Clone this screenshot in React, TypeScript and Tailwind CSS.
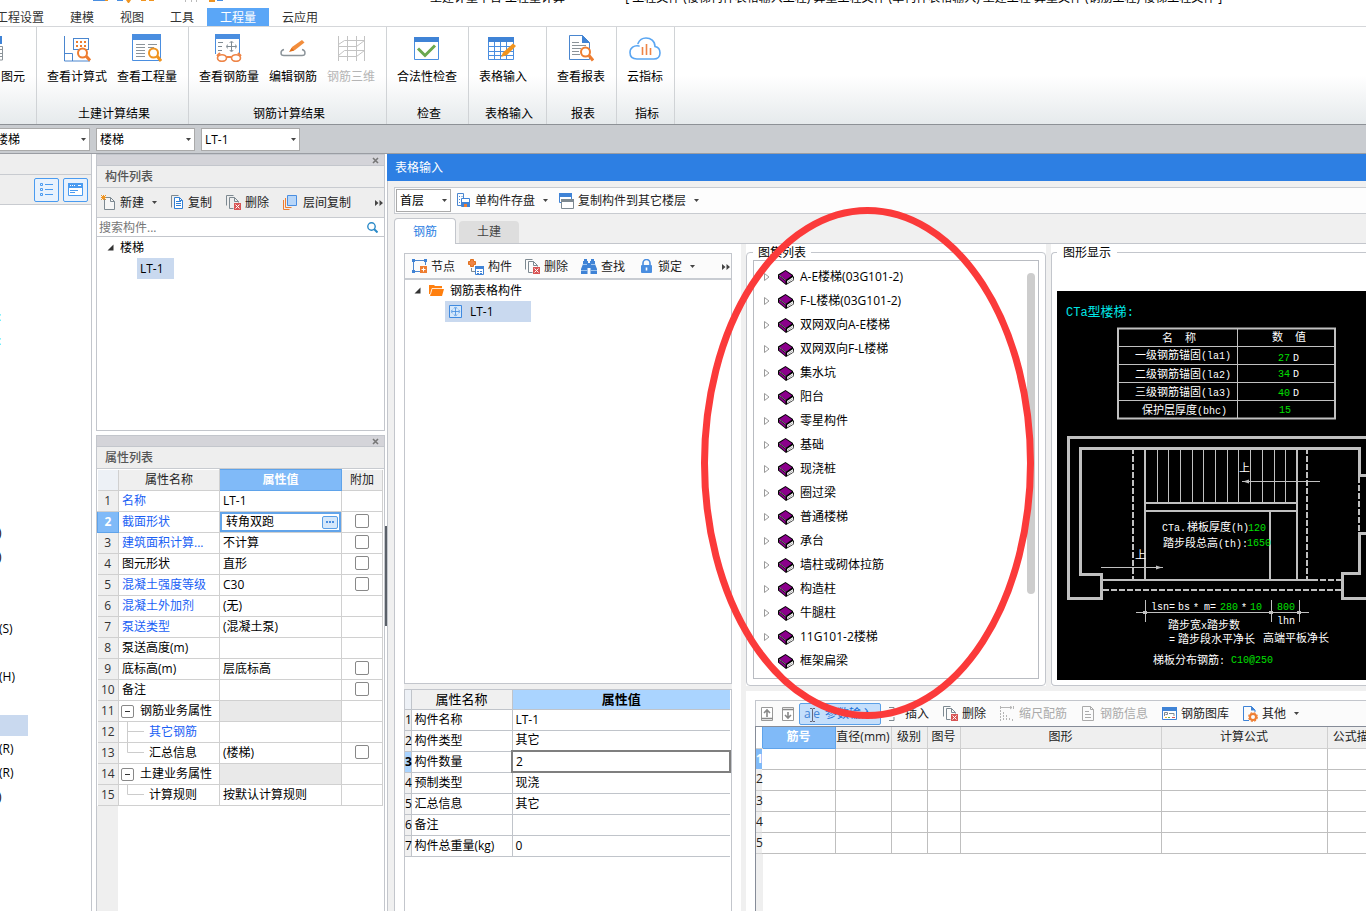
import type { ReactNode } from "react";

const treeItems = [
  "A-E楼梯(03G101-2)",
  "F-L楼梯(03G101-2)",
  "双网双向A-E楼梯",
  "双网双向F-L楼梯",
  "集水坑",
  "阳台",
  "零星构件",
  "基础",
  "现浇桩",
  "圈过梁",
  "普通楼梯",
  "承台",
  "墙柱或砌体拉筋",
  "构造柱",
  "牛腿柱",
  "11G101-2楼梯",
  "框架扁梁",
];

type PropRow = {
  name: string;
  value?: string;
  blue?: boolean;
  check?: boolean;
  group?: boolean;
  child?: "mid" | "last";
  active?: boolean;
};

const propRows: PropRow[] = [
  { name: "名称", value: "LT-1", blue: true },
  { name: "截面形状", value: "转角双跑", blue: true, check: true, active: true },
  { name: "建筑面积计算...", value: "不计算", blue: true, check: true },
  { name: "图元形状", value: "直形", check: true },
  { name: "混凝土强度等级", value: "C30", blue: true, check: true },
  { name: "混凝土外加剂", value: "(无)", blue: true },
  { name: "泵送类型", value: "(混凝土泵)", blue: true },
  { name: "泵送高度(m)" },
  { name: "底标高(m)", value: "层底标高", check: true },
  { name: "备注", check: true },
  { name: "钢筋业务属性", group: true },
  { name: "其它钢筋", blue: true, child: "mid" },
  { name: "汇总信息", value: "(楼梯)", check: true, child: "last" },
  { name: "土建业务属性", group: true },
  { name: "计算规则", value: "按默认计算规则", child: "last" },
];

const memberRows = [
  ["构件名称", "LT-1"],
  ["构件类型", "其它"],
  ["构件数量", "2"],
  ["预制类型", "现浇"],
  ["汇总信息", "其它"],
  ["备注", ""],
  ["构件总重量(kg)", "0"],
];

const navRows = ["", "", "", "", ":", ":", "", "", "", "", "", "", "", ")", ")", "", "", "(S)", "", "(H)", "", "sel", "(R)", "(R)", ")"];

/* ---------- icons ---------- */

function Svg({ w, h, children }: { w: number; h: number; children: ReactNode }) {
  return (
    <svg width={w} height={h} viewBox={`0 0 ${w} ${h}`} fill="none" className="shrink-0" aria-hidden="true">
      {children}
    </svg>
  );
}

const Caret = () => (
  <Svg w={5} h={3}>
    <path d="M0 0h5L2.500 3z" fill="#444" />
  </Svg>
);

const More = () => (
  <Svg w={8} h={6}>
    <path d="M0 0l3.500 3L0 6zM4.500 0L8 3 4.500 6z" fill="#444" />
  </Svg>
);

const Opened = () => (
  <Svg w={7} h={7}>
    <path d="M6.500 .5v6h-6z" fill="#333" />
  </Svg>
);

const CloseMark = () => (
  <Svg w={7} h={7}>
    <path d="M1 1l5 5M6 1L1 6" stroke="#777" strokeWidth="1.6" />
  </Svg>
);

const CalcIcon = () => (
  <Svg w={28} h={28}>
    <path d="M1.500 2v25H27M1.500 19.500h8v7.500" stroke="#4a86cf" />
    <rect x="10.500" y="4.500" width="15" height="11" stroke="#4a86cf" />
    <path d="M13 8h2m2 0h2m2 0h2M13 12h2m2 0h2m2 0h2" stroke="#ee7d31" strokeWidth="2" />
    <circle cx="19.500" cy="19" r="4.500" fill="#fff" stroke="#ee7d31" strokeWidth="2" />
    <path d="M23 22l4 4.500" stroke="#ee7d31" strokeWidth="3" />
  </Svg>
);

const QuantityIcon = () => (
  <Svg w={30} h={28}>
    <path d="M.5 .5h28v26H.5z" fill="#fff" stroke="#4a8ee0" />
    <path d="M0 0h29v6H0z" fill="#4a8ee0" />
    <path d="M4 10.500h9M4 13.500h9M4 16.500h9M4 19.500h9M4 22.500h9M16 10.500h9M16 13.500h6" stroke="#8b9399" />
    <circle cx="21.500" cy="19" r="4.500" fill="#fff" stroke="#f0941f" strokeWidth="2" />
    <path d="M25 22l4 5" stroke="#f0941f" strokeWidth="3" />
  </Svg>
);

const RebarQuantityIcon = () => (
  <Svg w={30} h={28}>
    <path d="M1.500 20V.5h24V20" fill="#fff" stroke="#4a8ee0" />
    <path d="M1 0h25v5H1z" fill="#4a8ee0" />
    <path d="M4 8.500h5M4 12.500h4M4 16.500h4" stroke="#7f8b93" />
    <path d="M17.500 8v9M13 12.500h9M16 9c0-2 3-2 3 0M16 16c0 2 3 2 3 0M14 11c-2 0-2 3 0 3M21 11c2 0 2 3 0 3" stroke="#7f8b93" />
    <path d="M6 19l-3 3M24 19l3 3M12.500 23h5" stroke="#ee8446" strokeWidth="2" />
    <ellipse cx="8" cy="24" rx="4.500" ry="3.300" fill="#fff" stroke="#ee8446" strokeWidth="1.600" />
    <ellipse cx="22" cy="24" rx="4.500" ry="3.300" fill="#fff" stroke="#ee8446" strokeWidth="1.600" />
  </Svg>
);

const EditRebarIcon = () => (
  <Svg w={26} h={28}>
    <path d="M4 15.500c-4 1-4 6 0 6h18c4 0 4-5 0-6" stroke="#8b9399" strokeWidth="1.400" />
    <path d="M10 17l2-4L22 6l2.500 2.500L15 16z" fill="#f28d3c" />
    <path d="M9 18l2.500-4 3 2.500z" fill="#e0701d" />
  </Svg>
);

const Rebar3dIcon = () => (
  <Svg w={28} h={28}>
    <path d="M1.500 2v25M10.500 2v25M19.500 2v25M27.500 2v25M1.500 10.500l6-4h20M1.500 12.500h18l8-6M1.500 21.500l6-5h20M1.500 22.500h18l8-6" stroke="#c3c3c3" />
  </Svg>
);

const LegalIcon = () => (
  <Svg w={26} h={28}>
    <path d="M.5 3.500h24v22H.5z" fill="#fff" stroke="#4a8ee0" />
    <path d="M0 3h25v5H0z" fill="#3f83d6" />
    <path d="M4 14.500l7 7 10-10" stroke="#6aa84f" strokeWidth="3" />
  </Svg>
);

const TableInputIcon = () => (
  <Svg w={30} h={28}>
    <path d="M.5 3.500h25v22H.5z" fill="#fff" stroke="#4a8ee0" />
    <path d="M0 3h26v5H0z" fill="#3f83d6" />
    <path d="M0 12.500h25M0 17.500h25M0 21.500h25M6.500 8v17M12.500 8v17M18.500 8v17" stroke="#4a8ee0" />
    <path d="M13 23l2-4.500L25 9.500l3 2.500-9 9z" fill="#f0941f" />
  </Svg>
);

const ReportIcon = () => (
  <Svg w={26} h={28}>
    <path d="M1.500 1.500h13l7 7v17h-20z" fill="#fff" stroke="#4a86cf" />
    <path d="M14 1v8h8z" fill="#3f83d6" />
    <path d="M4 8.500h7M4 11.500h14M4 14.500h9M4 17.500h7M4 20.500h8" stroke="#8b9399" />
    <circle cx="17.500" cy="18" r="4.500" fill="#fff" stroke="#ee7d31" strokeWidth="2" />
    <path d="M21 21.500l4 5" stroke="#ee7d31" strokeWidth="3" />
  </Svg>
);

const CloudIcon = () => (
  <Svg w={32} h={28}>
    <path d="M10 12c-5-1-9 2-9 6.500S4 25 8 25h17c3.500 0 6-2.500 6-6s-2-6-5-6.500C26 7 21.500 4 17 4s-7 3-8 5.500" stroke="#5aa6f2" strokeWidth="1.600" strokeLinecap="round" />
    <path d="M13.500 13v8M17.500 10v11M21.500 14v7" stroke="#ee8446" strokeWidth="1.600" />
  </Svg>
);

const NewIcon = () => (
  <Svg w={15} h={15}>
    <path d="M3.500 2.500h6l4 4v8h-10z" fill="#f6f6f6" stroke="#7d8991" />
    <path d="M9.500 2.500v4h4" stroke="#7d8991" />
    <path d="M0 0l5 5M5 0L0 5M2.500 0v5M0 2.500h5" stroke="#f0941f" />
  </Svg>
);

const CopyIcon = () => (
  <Svg w={13} h={15}>
    <path d="M.5 12.500V.5h7" stroke="#7d8991" />
    <path d="M3.500 2.500h5l3 3v8h-8z" fill="#fff" stroke="#2f7fd6" />
    <path d="M5 6.500h5M5 8.500h5M5 10.500h5M8.500 2.500v3h3" stroke="#2f7fd6" />
  </Svg>
);

const DeleteIcon = () => (
  <Svg w={15} h={15}>
    <path d="M.5 10.500V.5h7M3.500 13.500V2.500h5l4 4v1M3.500 13.500h4M8.500 2.500v4h4" stroke="#7d8991" />
    <path d="M8 8h7v7H8z" fill="#d95555" />
    <path d="M9.500 9.500l4 4M13.500 9.500l-4 4" stroke="#fff" />
  </Svg>
);

const LayerCopyIcon = () => (
  <Svg w={16} h={15}>
    <path d="M.5 5v9.500h6M2.500 3v9.500h6" stroke="#ee7d31" />
    <path d="M4.500 .5h9v10h-9z" fill="#b8d6f8" stroke="#4a8ee0" />
  </Svg>
);

const SaveMemberIcon = () => (
  <Svg w={14} h={15}>
    <path d="M4 12.500H.5V.5h6V5" stroke="#4a86cf" />
    <path d="M2 3.500h1M2 6.500h1M2 9.500h1M4.500 3.500h1" stroke="#4a86cf" />
    <path d="M4.500 5.500h8v8h-8z" fill="#fff" stroke="#3f83d6" />
    <path d="M5 9h8v5H5z" fill="#3f83d6" />
    <path d="M7 11h3v3H7z" fill="#ee7d31" />
  </Svg>
);

const CopyFloorIcon = () => (
  <Svg w={16} h={16}>
    <path d="M1.500 .5h12v9h-12z" fill="#fff" stroke="#3f83d6" />
    <path d="M1 0h13v4H1z" fill="#3f83d6" />
    <path d="M3.500 6.500h12v9h-12z" fill="#fff" stroke="#7d8991" />
    <path d="M3 6h13v3H3z" fill="#7d8991" />
  </Svg>
);

const NodeIcon = () => (
  <Svg w={15} h={15}>
    <path d="M8 12.500H1.500v-11h12V6" stroke="#4a86cf" />
    <path d="M0 0h3v3H0zM12 0h3v3h-3zM0 11h3v3H0z" fill="#3f83d6" />
    <path d="M8 7h7v7H8z" fill="#ee7d31" />
    <path d="M9.500 10.500h4M11.500 8.500v4" stroke="#fff" />
  </Svg>
);

const MemberIcon = () => (
  <Svg w={16} h={16}>
    <path d="M2.500 .5h3v2h2v3h-2v2h-3v-2h-2v-3h2z" fill="#ee8446" stroke="#e0701d" />
    <path d="M3.500 9v3.500H7" stroke="#7d8991" />
    <path d="M7.500 7.500h8v8h-8z" fill="#fff" stroke="#3f83d6" />
    <path d="M7 7h9v3H7z" fill="#3f83d6" />
    <path d="M9 12.500h2m1 0h2M9 14.500h2m1 0h2" stroke="#3f83d6" />
  </Svg>
);

const FindIcon = () => (
  <Svg w={16} h={15}>
    <path d="M3 0h3v2h1v2h2V2h1V0h3v2h1v3l2 5v5H9.500V9h-3v6H0v-5l2-5V2h1z" fill="#3f83d6" />
    <path d="M2 5.500h4M10 5.500h4M0 11.500h6.500M9.500 11.500H16" stroke="#9cc4f0" />
  </Svg>
);

const LockIcon = () => (
  <Svg w={16} h={15}>
    <path d="M5 7V4a3.500 3.500 0 017 0v3" stroke="#4a8ee0" strokeWidth="1.600" />
    <rect x="3" y="6" width="11" height="8" rx="1" fill="#4a8ee0" />
    <path d="M8.500 8.500v3" stroke="#fff" strokeWidth="1.600" />
  </Svg>
);

const FolderIcon = () => (
  <Svg w={15} h={13}>
    <path d="M0 1h5l1 1h7v3H3l-1 5H0z" fill="#ff7f0e" />
    <path d="M3 5h12l-2 7H1z" fill="#ff7f0e" />
    <path d="M1.500 10l1.500-5.500h11" stroke="#fff" strokeWidth=".8" />
  </Svg>
);

const RebarCellIcon = () => (
  <Svg w={13} h={13}>
    <path d="M.5 .5h12v12H.5z" fill="#d6e8fb" stroke="#3f8ae0" />
    <path d="M6.500 3v7M3 6.500h7M5 3.500c0-1.500 3-1.500 3 0M5 9.500c0 1.500 3 1.500 3 0M3.500 5c-1.500 0-1.500 3 0 3M9.500 5c1.500 0 1.500 3 0 3" stroke="#3f8ae0" strokeWidth=".8" />
  </Svg>
);

const BookIcon = () => (
  <Svg w={16} h={15}>
    <path d="M7.500 0L15 5v1l1 1-.5 3.500L8 15 0 8.500V4.500z" fill="#000" />
    <path d="M7.500 1L14 5.500 8 9.700 1.500 5z" fill="#8b008b" />
    <path d="M1 6l6.500 5.300v2.400L1 8.300z" fill="#8b008b" />
    <path d="M9 11l6-4v3.200L9 13.500z" fill="#fff" />
    <path d="M9 12.500l5.500-3.500" stroke="#888" strokeWidth=".7" />
    <path d="M1.500 5.500l6.500 5" stroke="#fff" strokeWidth=".8" strokeDasharray="1.500 1" />
  </Svg>
);

const ArrowBoxIcon = ({ down }: { down?: boolean }) => (
  <Svg w={13} h={14}>
    <path d="M.5 .5h11v13H.5z" fill="#fff" stroke="#999" />
    {down ? (
      <path d="M.5 2.500h11M6 5v6M3 8l3 3 3-3" stroke="#888" strokeWidth="1.600" />
    ) : (
      <path d="M.5 11.500h11M6 10V3M3 6l3-3 3 3" stroke="#888" strokeWidth="1.600" />
    )}
  </Svg>
);

const ParamIcon = () => (
  <span className="relative flex w-4 shrink-0 justify-between text-[#3f83d6]">
    <span>a</span>
    <span>e</span>
    <svg width="5" height="14" viewBox="0 0 5 14" fill="none" className="absolute left-[6px] top-[2px]" aria-hidden="true">
      <path d="M0 .5h2l.5 .5.500-.5h2M2.500 1v12M0 13.500h2l.5-.5.500 .5h2" stroke="#667" />
    </svg>
  </span>
);

const InsertIcon = () => (
  <Svg w={15} h={16}>
    <path d="M3 1.500h5V5M3 14.500h5V11M5 8h6" stroke="#7d8991" />
  </Svg>
);

const ScaleIcon = () => (
  <Svg w={15} h={15}>
    <path d="M.5 4v11M3.500 6v9M6.500 9v6M9.500 12v3M12.500 13v2" stroke="#b5b5b5" strokeDasharray="2 1" />
    <path d="M1 1.500h11M10 0l2 1.500L10 3M.5 0v3M13.500 0v3" stroke="#b5b5b5" />
  </Svg>
);

const InfoIcon = () => (
  <Svg w={15} h={15}>
    <path d="M1.500 .5h8l3 3v11h-11z" stroke="#aaa" />
    <path d="M4 5.500h4M4 8.500h6M4 11.500h6M9.500 .5v3h3" stroke="#aaa" />
  </Svg>
);

const LibraryIcon = () => (
  <Svg w={15} h={14}>
    <path d="M.5 .5h14v12H.5z" fill="#fff" stroke="#3f83d6" />
    <path d="M0 0h15v4H0z" fill="#3f83d6" />
    <path d="M2.500 9V5.500h3v2h-2M7 6.500h5V9" stroke="#7d8991" />
    <path d="M3 10.500h2" stroke="#e8b02c" />
    <path d="M6 10.500h2" stroke="#5cae54" />
    <path d="M10 10.500h3" stroke="#d95555" />
  </Svg>
);

const OtherIcon = () => (
  <Svg w={15} h={16}>
    <path d="M6 14.500H.5V.5h8l3.500 3.500v2" stroke="#3f83d6" />
    <path d="M8 0v4.500h4.500z" fill="#3f83d6" />
    <circle cx="10" cy="11" r="3" stroke="#ee7d31" strokeWidth="2" />
    <circle cx="10" cy="11" r="4.300" stroke="#ee7d31" strokeWidth="1.200" strokeDasharray="2 1.400" />
  </Svg>
);

/* ---------- small controls ---------- */

function ToolButton({
  icon,
  label,
  caret,
  disabled,
}: {
  icon: ReactNode;
  label: string;
  caret?: boolean;
  disabled?: boolean;
}) {
  return (
    <button
      type="button"
      disabled={disabled}
      className="flex shrink-0 items-center gap-1 whitespace-nowrap text-[#222] disabled:text-[#aaa]"
    >
      {icon}
      <span>{label}</span>
      {caret && (
        <span className="ml-1">
          <Caret />
        </span>
      )}
    </button>
  );
}

function Select({ label, value, className }: { label: string; value: string; className: string }) {
  return (
    <div className={`relative shrink-0 ${className}`}>
      <select
        aria-label={label}
        defaultValue={value}
        className="block h-full w-full appearance-none border border-[#aaa] bg-white pt-px pl-[3px] text-xs text-black"
      >
        <option>{value}</option>
      </select>
      <span className="pointer-events-none absolute inset-y-0 right-1 flex items-center">
        <Caret />
      </span>
    </div>
  );
}

function RibbonGroup({ title, className, children }: { title: string; className: string; children: ReactNode }) {
  return (
    <section className={`flex shrink-0 flex-col border-r border-[#d0d3d6] pt-[7px] ${className}`}>
      <div className="flex gap-[10px] pl-[10px]">{children}</div>
      <h2 className="mt-auto mb-[2px] pl-[3px] text-center">{title}</h2>
    </section>
  );
}

function RibbonButton({ icon, label, disabled }: { icon: ReactNode; label: string; disabled?: boolean }) {
  return (
    <button
      type="button"
      disabled={disabled}
      className="flex shrink-0 flex-col items-center gap-[7px] whitespace-nowrap disabled:text-[#b5b5b5]"
    >
      {icon}
      <span>{label}</span>
    </button>
  );
}

function PanelTitle({ title }: { title: string }) {
  return (
    <>
      <div className="flex h-[11px] shrink-0 items-center justify-end border-b border-[#c3c6cc] bg-[#d4d4d9] pr-[5px]">
        <button type="button" aria-label={`关闭${title}`}>
          <CloseMark />
        </button>
      </div>
      <h2 className="flex h-[22px] shrink-0 items-center border-b border-[#c8cbd0] bg-[#eee] pl-2 font-medium text-[#555]">
        {title}
      </h2>
    </>
  );
}

/* ---------- header ---------- */

function Header() {
  const tabs = ["工程设置", "建模", "视图", "工具", "工程量", "云应用"];
  return (
    <header className="shrink-0">
      <div className="flex h-2 items-start overflow-hidden">
        <div className="flex h-[3px] w-[430px] shrink-0 pl-[93px]">
          <Svg w={135} h={3}>
            <path d="M0 0h13v1H0zM24 0h6v1h-6zM124 0h6v1h-6z" fill="#4a8ee0" />
            <path d="M12 0h3v1h-3zM33 0h5l-2 3h-1zM48 0h5v1h-5zM56 0h5v1h-5zM116 0h6v2h-6z" fill="#f0941f" />
            <path d="M92 0h1v2h-1zM98 0h1v2h-1zM103 0h1v2h-1z" fill="#bbb" />
          </Svg>
        </div>
        <div className="flex h-[3px] items-end whitespace-nowrap leading-[10px] text-black" aria-hidden="true">
          <span>土建计量平台 工程量计算</span>
          <span className="ml-[60px]">[ 工程文件 (楼梯构件表格输入工程) 算量工程文件 (单构件表格输入) 土建工程 算量文件 (钢筋工程) 楼梯工程文件 ]</span>
        </div>
      </div>
      <nav className="-ml-[17px] flex h-[18px] whitespace-nowrap text-[#333]">
        {tabs.map((tab) => (
          <button
            key={tab}
            type="button"
            className={tab === "工程量" ? "bg-[#5aa6f7] px-[13px] pt-[2px] text-white" : "px-[13px] pt-[2px]"}
          >
            {tab}
          </button>
        ))}
      </nav>
      <div className="flex h-[99px] overflow-hidden border-t border-b border-t-[#d5d7da] border-b-[#8d9196] bg-gradient-to-b from-white from-50% to-[#e6eaec] text-black">
        <section className="flex w-[37px] shrink-0 flex-col border-r border-[#d0d3d6] pt-[7px]">
          <button type="button" className="flex flex-col items-start gap-[7px]">
            <Svg w={3} h={28}>
              <path d="M0 2h2v8H0z" fill="#3f83d6" />
              <path d="M0 12.500h2.500V26H0M0 15.500h2M0 19.500h2M0 22.500h2" stroke="#8b9399" />
            </Svg>
            <span className="pl-px">图元</span>
          </button>
        </section>
        <RibbonGroup title="土建计算结果" className="w-[152px]">
          <RibbonButton icon={<CalcIcon />} label="查看计算式" />
          <RibbonButton icon={<QuantityIcon />} label="查看工程量" />
        </RibbonGroup>
        <RibbonGroup title="钢筋计算结果" className="w-[198px]">
          <RibbonButton icon={<RebarQuantityIcon />} label="查看钢筋量" />
          <RibbonButton icon={<EditRebarIcon />} label="编辑钢筋" />
          <RibbonButton icon={<Rebar3dIcon />} label="钢筋三维" disabled />
        </RibbonGroup>
        <RibbonGroup title="检查" className="w-[82px]">
          <RibbonButton icon={<LegalIcon />} label="合法性检查" />
        </RibbonGroup>
        <RibbonGroup title="表格输入" className="w-[78px]">
          <RibbonButton icon={<TableInputIcon />} label="表格输入" />
        </RibbonGroup>
        <RibbonGroup title="报表" className="w-[70px]">
          <RibbonButton icon={<ReportIcon />} label="查看报表" />
        </RibbonGroup>
        <RibbonGroup title="指标" className="w-[58px]">
          <RibbonButton icon={<CloudIcon />} label="云指标" />
        </RibbonGroup>
      </div>
      <div className="flex h-[29px] items-center gap-[6px] border-b border-[#9a9da3] bg-[#c9ccd0]">
        <Select label="构件类别" value="楼梯" className="-ml-2 h-[23px] w-[98px]" />
        <Select label="构件类型" value="楼梯" className="h-[23px] w-[99px]" />
        <Select label="构件" value="LT-1" className="h-[23px] w-[99px]" />
      </div>
    </header>
  );
}

/* ---------- left panels ---------- */

function NavStrip() {
  return (
    <aside className="mr-1 flex w-[92px] shrink-0 flex-col overflow-hidden border-r border-[#c3c6cc] bg-white">
      <div className="h-[21px] shrink-0 border-b border-[#c8cbd0] bg-[#eee]" />
      <div className="flex h-[30px] shrink-0 items-center justify-end gap-1 border-b border-[#c8cbd0] bg-[#eee] pr-[3px]">
        <button type="button" aria-label="列表" className="flex h-6 w-[25px] items-center justify-center rounded-xs border border-[#4a9bf0] bg-[#e8f2fd]">
          <Svg w={13} h={14}>
            <path d="M.5 .5h2v2h-2zM.5 5.500h2v2h-2zM.5 10.500h2v2h-2zM5 1.500h8M5 6.500h8M5 11.500h8" stroke="#4a9bf0" />
          </Svg>
        </button>
        <button type="button" aria-label="面板" className="flex h-6 w-[25px] items-center justify-center rounded-xs border border-[#4a9bf0] bg-[#e8f2fd]">
          <Svg w={15} h={13}>
            <path d="M.5 .5h14v12H.5z" fill="#fff" stroke="#4a9bf0" />
            <path d="M0 0h15v5H0z" fill="#4a9bf0" />
            <path d="M2 2.500h1m1 0h1m1 0h1M10 2.500h3" stroke="#fff" />
            <path d="M2 7.500h8M2 9.500h5" stroke="#4a9bf0" />
          </Svg>
        </button>
      </div>
      <ul className="pt-1 text-black">
        {navRows.map((row, i) => (
          <li key={i} className="flex h-6 items-center">
            {row === "sel" ? (
              <span className="h-[21px] w-7 bg-[#c9d9ef]" />
            ) : (
              <span className={row === ":" ? "-ml-[2px] text-[#00c8d8]" : row === ")" ? "-ml-[2px]" : "-ml-px"}>{row}</span>
            )}
          </li>
        ))}
      </ul>
    </aside>
  );
}

function ComponentPanel() {
  return (
    <section className="flex h-[277px] shrink-0 flex-col border border-[#c3c6cc] bg-white">
      <PanelTitle title="构件列表" />
      <div className="flex h-[30px] shrink-0 items-center gap-[14px] border-b border-[#c8cbd0] bg-[#eee] pl-1">
        <ToolButton icon={<NewIcon />} label="新建" caret />
        <ToolButton icon={<CopyIcon />} label="复制" />
        <ToolButton icon={<DeleteIcon />} label="删除" />
        <ToolButton icon={<LayerCopyIcon />} label="层间复制" />
        <button type="button" aria-label="更多" className="ml-auto pr-px">
          <More />
        </button>
      </div>
      <div className="flex h-[19px] shrink-0 items-center border-b border-[#c3c6cc] pr-[6px]">
        <input
          aria-label="搜索构件"
          placeholder="搜索构件..."
          className="h-full min-w-0 flex-1 bg-white pl-[2px] text-xs outline-none placeholder:text-[#777]"
        />
        <Svg w={11} h={11}>
          <circle cx="4.500" cy="4.500" r="3.700" stroke="#2b8ac8" strokeWidth="1.400" />
          <path d="M7 7l3.500 3.500" stroke="#2b8ac8" strokeWidth="2" />
        </Svg>
      </div>
      <ul className="text-black">
        <li>
          <div className="flex h-[21px] items-center gap-[6px] pl-[10px]">
            <Opened />
            <span>楼梯</span>
          </div>
          <ul>
            <li className="ml-10 flex h-[21px] w-[37px] items-center bg-[#c9d9ef] pl-[3px]">LT-1</li>
          </ul>
        </li>
      </ul>
    </section>
  );
}

function NameCell({ row }: { row: PropRow }) {
  if (row.group) {
    return (
      <div className="flex items-center gap-[6px] pl-[2px]">
        <button type="button" aria-label={`折叠${row.name}`} className="flex size-[13px] items-center justify-center rounded-xs border border-[#888] bg-white">
          <span className="h-px w-[5px] bg-[#333]" />
        </button>
        <span>{row.name}</span>
      </div>
    );
  }
  if (row.child) {
    return (
      <div className="flex items-center gap-[5px] pl-2">
        <svg width="17" height="20" viewBox="0 0 17 20" fill="none" className="shrink-0" aria-hidden="true">
          <path d={row.child === "mid" ? "M.5 0v20M0 9.500h17" : "M.5 0v9.500H17"} stroke="#ccc" />
        </svg>
        <span>{row.name}</span>
      </div>
    );
  }
  return <span className="pl-[3px]">{row.name}</span>;
}

function PropertyPanel() {
  return (
    <section className="mt-1 flex min-h-0 flex-1 flex-col overflow-hidden border border-b-0 border-[#c3c6cc] bg-white">
      <PanelTitle title="属性列表" />
      <table className="w-[285px] table-fixed border-collapse leading-4 text-black">
        <colgroup>
          <col className="w-[21px]" />
          <col className="w-[101px]" />
          <col className="w-[122px]" />
          <col className="w-[41px]" />
        </colgroup>
        <thead>
          <tr className="h-[21px] text-[#222]">
            <th className="border-r border-b border-[#d0d0d0] bg-[#edf1f6] p-0" />
            <th className="border-r border-b border-[#d0d0d0] bg-[#efefef] p-0 font-normal">属性名称</th>
            <th className="border border-[#5fa3ea] bg-[#80baf8] p-0 font-bold text-white">属性值</th>
            <th className="border-r border-b border-[#d0d0d0] bg-[#efefef] p-0 font-normal">附加</th>
          </tr>
        </thead>
        <tbody>
          {propRows.map((row, i) => (
            <tr key={i} className="h-[21px] whitespace-nowrap">
              <td
                className={
                  row.active
                    ? "border border-[#5fa3ea] bg-[#80baf8] p-0 text-center font-bold text-white"
                    : "border-r border-b border-[#d0d0d0] bg-[#efefef] p-0 text-center text-[#333]"
                }
              >
                {i + 1}
              </td>
              <td className={row.blue ? "border-r border-b border-[#d0d0d0] p-0 text-[#1a5ff5]" : "border-r border-b border-[#d0d0d0] p-0"}>
                <NameCell row={row} />
              </td>
              <td
                className={
                  row.group
                    ? "border-r border-b border-[#d0d0d0] bg-[#e9e9e9] p-0"
                    : "border-r border-b border-[#d0d0d0] p-0 pl-[3px]"
                }
              >
                {row.active ? (
                  <div className="-ml-[3px] flex h-5 items-center justify-between border-2 border-[#62a4ea] pr-px pl-1">
                    <span>{row.value}</span>
                    <button type="button" aria-label="选择截面形状" className="flex h-[13px] w-4 items-center justify-center rounded-xs border border-[#5a9fe6] bg-[#d6e8fb]">
                      <Svg w={10} h={2}>
                        <path d="M1 0h2v2H1zM4 0h2v2H4zM7 0h2v2H7z" fill="#4a8ee0" />
                      </Svg>
                    </button>
                  </div>
                ) : (
                  row.value
                )}
              </td>
              <td className="border-r border-b border-[#d0d0d0] p-0">
                {row.check && (
                  <input
                    type="checkbox"
                    aria-label={`附加${row.name}`}
                    className="mx-auto mb-[3px] block size-[14px] appearance-none rounded-xs border border-[#888] bg-white"
                  />
                )}
              </td>
            </tr>
          ))}
        </tbody>
      </table>
      <div className="w-[21px] flex-1 bg-[#efefef]" />
    </section>
  );
}

/* ---------- table input window ---------- */

function MemberPane() {
  return (
    <div className="flex w-[347px] shrink-0 flex-col border-l border-[#c3c6cc] bg-white px-[9px] pt-[9px]">
      <div className="flex h-[431px] shrink-0 flex-col border border-[#c3c6cc]">
        <div className="flex h-[26px] shrink-0 items-center gap-[13px] border-b-2 border-[#c8ccd2] bg-[#fbfbfb] pt-px pl-[7px]">
          <ToolButton icon={<NodeIcon />} label="节点" />
          <ToolButton icon={<MemberIcon />} label="构件" />
          <ToolButton icon={<DeleteIcon />} label="删除" />
          <ToolButton icon={<FindIcon />} label="查找" />
          <ToolButton icon={<LockIcon />} label="锁定" caret />
          <button type="button" aria-label="更多" className="ml-auto pr-px">
            <More />
          </button>
        </div>
        <ul className="text-black">
          <li>
            <div className="flex h-[21px] items-center pl-[9px]">
              <Opened />
              <span className="ml-2 mr-[6px]">
                <FolderIcon />
              </span>
              <span>钢筋表格构件</span>
            </div>
            <ul>
              <li className="ml-10 flex h-[21px] w-[86px] items-center gap-2 bg-[#c9d9ef] pl-1">
                <RebarCellIcon />
                <span>LT-1</span>
              </li>
            </ul>
          </li>
        </ul>
      </div>
      <div className="h-[5px] shrink-0 bg-[#f0f0f0]" />
      <div className="flex-1 border border-b-0 border-[#c3c6cc]">
        <table className="w-full table-fixed border-collapse leading-4 text-black">
          <colgroup>
            <col className="w-[6px]" />
            <col className="w-[101px]" />
            <col />
          </colgroup>
          <thead>
            <tr className="h-[19px] text-[13px]">
              <th className="border-r border-b border-[#c0c4ca] bg-[#edf1f6] p-0" />
              <th className="border-r border-b border-[#c0c4ca] bg-[#f0f0f0] p-0 font-normal">属性名称</th>
              <th className="border-b border-[#c0c4ca] bg-[#aad4ff] p-0 font-bold">属性值</th>
            </tr>
          </thead>
          <tbody>
            {memberRows.map(([name, value], i) => (
              <tr key={name} className="h-[21px]">
                <td
                  className={
                    i === 2
                      ? "border-r border-b border-[#c0c4ca] bg-[#aad4ff] p-0 font-bold"
                      : "border-r border-b border-[#c0c4ca] bg-[#f0f0f0] p-0"
                  }
                >
                  {i + 1}
                </td>
                <td className="border-r border-b border-[#c0c4ca] p-0 pl-[3px]">{name}</td>
                <td className={i === 2 ? "border-2 border-[#7f7f7f] p-0 pl-[3px]" : "border-b border-[#c0c4ca] p-0 pl-[3px]"}>
                  {value}
                </td>
              </tr>
            ))}
          </tbody>
        </table>
      </div>
    </div>
  );
}

function AtlasList() {
  return (
    <fieldset className="flex w-[300px] shrink-0 flex-col rounded border border-[#c3c6cc] px-[6px] pb-[6px]">
      <legend className="px-[5px] pt-[2px] leading-[14px] text-black">图集列表</legend>
      <div className="relative min-h-0 flex-1 overflow-hidden border border-[#b9bcc2] bg-white pt-1">
        <ul className="text-black">
          {treeItems.map((item, i) => (
            <li key={item} className="flex h-6 items-center pl-[10px]">
              <span className="w-[14px]">
                {i < 16 && (
                  <Svg w={6} h={8}>
                    <path d="M.5 .5v7l4.500-3.500z" stroke="#999" />
                  </Svg>
                )}
              </span>
              <BookIcon />
              <span className="ml-[6px]">{item}</span>
            </li>
          ))}
          <li className="flex h-6 items-center pl-6">
            <BookIcon />
          </li>
        </ul>
        <div className="absolute top-3 right-[3px] h-[321px] w-2 rounded-full bg-[#cdcdcd]" />
      </div>
    </fieldset>
  );
}

const CAD_GREEN = "#00e000";

// Latin runs are set one size down so that they keep half the width of a CJK glyph
function CadText({ x, y, fill = "#fff", size = 11, children }: { x: number; y: number; fill?: string; size?: number; children: string }) {
  return (
    <text x={x} y={y} fill={fill} fontSize={size}>
      {children.split(/([ -~]+)/).map((part, i) => (
        <tspan key={i} fontSize={i % 2 ? size - 1 : size}>
          {part}
        </tspan>
      ))}
    </text>
  );
}

function StairDrawing() {
  const treads = [100, 111, 123, 135, 146, 158, 170, 181, 193, 205, 217, 228];
  return (
    <svg
      viewBox="0 0 309 389"
      width="309"
      height="389"
      fill="none"
      role="img"
      aria-label="CTa型楼梯"
      className="block font-['Liberation_Mono','Noto_Sans_CJK_SC',monospace]"
    >
      <CadText x={9} y={25} fill="#00e5e5" size={13}>CTa型楼梯:</CadText>

      <g stroke="#c0c0c0">
        <path d="M61 37.500h217v90H61z" strokeWidth="2" />
        <path d="M61 55.500h217M61 73.500h217M61 91.500h217M61 109.500h217M180.500 37v90" />
      </g>
      <CadText x={105} y={51}>名</CadText>
      <CadText x={128} y={51}>称</CadText>
      <CadText x={215} y={50}>数</CadText>
      <CadText x={238} y={50}>值</CadText>
      <CadText x={78} y={68}>一级钢筋锚固(la1)</CadText>
      <CadText x={78} y={87}>二级钢筋锚固(la2)</CadText>
      <CadText x={78} y={105}>三级钢筋锚固(la3)</CadText>
      <CadText x={85} y={123}>保护层厚度(bhc)</CadText>
      <CadText x={221} y={70} fill={CAD_GREEN}>27</CadText>
      <CadText x={221} y={86} fill={CAD_GREEN}>34</CadText>
      <CadText x={221} y={105} fill={CAD_GREEN}>40</CadText>
      <CadText x={222} y={122} fill={CAD_GREEN}>15</CadText>
      <CadText x={236} y={70}>D</CadText>
      <CadText x={236} y={86}>D</CadText>
      <CadText x={236} y={105}>D</CadText>

      <g stroke="#c0c0c0" strokeWidth="3">
        <path d="M310 146.500H11.500v161h33v-24h-21v-126h279v27h8" />
        <path d="M310 242.500h-7.500v40h-17v25H310" />
      </g>
      <g stroke="#c0c0c0" strokeWidth="2">
        <path d="M88 157v132M240 157v132M88 212h152M88 220h152M213 220v69M45 289h210" />
        <path d="M76 157v132M250 157v132M302 186v56M255 289h30M46 299h239" strokeDasharray="6 2" />
      </g>
      <g stroke="#c0c0c0">
        {treads.map((x) => (
          <path key={x} d={`M${x + 0.5} 158v54`} />
        ))}
        <path d="M185 190.500h78M44 276.500h62M79 321.500h173M88.500 309v22M214.500 309v22M242.500 309v22" />
      </g>
      <path d="M186 190.500l6-2v4zM105 276.500l-6-2v4zM86 320h4v3h-4zM212 320h4v3h-4zM240 320h4v3h-4z" fill="#c0c0c0" />

      <CadText x={182} y={181}>上</CadText>
      <CadText x={78} y={268}>上</CadText>
      <CadText x={105} y={240}>CTa.</CadText>
      <CadText x={130} y={240}>梯板厚度(h)</CadText>
      <CadText x={191} y={240} fill={CAD_GREEN}>120</CadText>
      <CadText x={106} y={256}>踏步段总高(th):</CadText>
      <CadText x={190} y={255} fill={CAD_GREEN}>1650</CadText>

      <CadText x={94} y={319}>lsn=</CadText>
      <CadText x={121} y={319}>bs</CadText>
      <CadText x={136} y={320}>*</CadText>
      <CadText x={147} y={319}>m=</CadText>
      <CadText x={163} y={319} fill={CAD_GREEN}>280</CadText>
      <CadText x={184} y={320}>*</CadText>
      <CadText x={193} y={319} fill={CAD_GREEN}>10</CadText>
      <CadText x={220} y={319} fill={CAD_GREEN}>800</CadText>
      <CadText x={220} y={333}>lhn</CadText>
      <CadText x={111} y={338}>踏步宽x踏步数</CadText>
      <CadText x={112} y={352}>=</CadText>
      <CadText x={121} y={352}>踏步段水平净长</CadText>
      <CadText x={206} y={351}>高端平板净长</CadText>
      <CadText x={96} y={373}>梯板分布钢筋:</CadText>
      <CadText x={174} y={372} fill={CAD_GREEN}>C10@250</CadText>
    </svg>
  );
}

function RebarGrid() {
  const cols = ["筋号", "直径(mm)", "级别", "图号", "图形", "计算公式", "公式描述"];
  return (
    <div className="mt-[5px] flex min-h-0 flex-1 flex-col overflow-hidden bg-white pt-[9px] pl-[9px]">
      <div className="flex h-[26px] shrink-0 items-center gap-[14px] border-t border-l border-[#c3c6cc] bg-[#fbfbfb] pl-[5px]">
        <div className="-mr-[10px] flex gap-2">
          <button type="button" aria-label="上移" disabled>
            <ArrowBoxIcon />
          </button>
          <button type="button" aria-label="下移" disabled>
            <ArrowBoxIcon down />
          </button>
        </div>
        <button
          type="button"
          className="-mr-[9px] flex h-[22px] w-[82px] shrink-0 items-center gap-[5px] rounded-xs border border-[#5aa0e8] bg-[#c5dffb] pl-1 text-[#1a6fd6]"
        >
          <ParamIcon />
          <span>参数输入</span>
        </button>
        <ToolButton icon={<InsertIcon />} label="插入" />
        <ToolButton icon={<DeleteIcon />} label="删除" />
        <ToolButton icon={<ScaleIcon />} label="缩尺配筋" disabled />
        <ToolButton icon={<InfoIcon />} label="钢筋信息" disabled />
        <ToolButton icon={<LibraryIcon />} label="钢筋图库" />
        <ToolButton icon={<OtherIcon />} label="其他" caret />
      </div>
      <div className="min-h-0 flex-1 overflow-hidden border-t border-l border-[#868c98]">
        <table className="w-[631px] table-fixed border-collapse leading-4 text-[#222]">
          <colgroup>
            <col className="w-[6px]" />
            <col className="w-[73px]" />
            <col className="w-[56px]" />
            <col className="w-[36px]" />
            <col className="w-[33px]" />
            <col className="w-[201px]" />
            <col className="w-[166px]" />
            <col />
          </colgroup>
          <thead>
            <tr className="h-[21px] whitespace-nowrap">
              <th className="border-b border-[#d0d0d0] bg-white p-0" />
              {cols.map((c, i) => (
                <th
                  key={c}
                  className={
                    i === 0
                      ? "border border-t-0 border-[#5fa3ea] bg-[#80baf8] p-0 font-bold text-white"
                      : "border-r border-b border-[#d0d0d0] bg-[#efefef] p-0 font-normal"
                  }
                >
                  {c}
                </th>
              ))}
            </tr>
          </thead>
          <tbody>
            {[1, 2, 3, 4, 5].map((n) => (
              <tr key={n} className="h-[21px]">
                <td className={n === 1 ? "bg-[#80baf8] p-0 font-bold text-white" : "border-b border-[#d0d0d0] bg-[#efefef] p-0"}>
                  {n}
                </td>
                {cols.map((c) => (
                  <td key={c} className="border-r border-b border-[#bfbfbf] p-0" />
                ))}
              </tr>
            ))}
          </tbody>
        </table>
        <div className="h-full w-[7px] bg-[#efefef]" />
      </div>
    </div>
  );
}

function TableInputWindow() {
  return (
    <main className="flex min-w-0 flex-1 flex-col overflow-hidden bg-[#f0f0f0]">
      <h1 className="flex h-[27px] shrink-0 items-center bg-[#2d7fe3] pl-2 text-white">表格输入</h1>
      <div className="flex min-h-0 flex-1 flex-col border-l border-[#c3c6cc] pt-[6px] pl-[6px]">
        <div className="flex h-[27px] shrink-0 items-center border border-r-0 border-[#c8cbd0] bg-[#fdfdfd] pl-px">
          <Select label="楼层" value="首层" className="h-[23px] w-[55px]" />
          <div className="ml-[6px] flex gap-[10px]">
            <ToolButton icon={<SaveMemberIcon />} label="单构件存盘" caret />
            <ToolButton icon={<CopyFloorIcon />} label="复制构件到其它楼层" caret />
          </div>
        </div>
        <div role="tablist" className="mt-1 flex h-[26px] shrink-0 items-end border-b border-[#c3c6cc]">
          <button type="button" role="tab" aria-selected="true" className="-mb-px h-[26px] w-[62px] rounded-t border border-b-0 border-[#c3c6cc] bg-white text-[#2d7fe3]">
            钢筋
          </button>
          <button type="button" role="tab" aria-selected="false" className="ml-[3px] h-[22px] w-[60px] rounded-t bg-[#dedede] text-[#444]">
            土建
          </button>
        </div>
        <div className="flex min-h-0 flex-1">
          <MemberPane />
          <div className="ml-[5px] flex min-w-0 flex-1 flex-col">
            <div className="flex h-[442px] shrink-0">
              <div className="flex bg-white">
                <AtlasList />
              </div>
              <div className="ml-[5px] flex min-w-0 flex-1 bg-white">
                <fieldset className="min-w-0 flex-1 rounded-l border border-r-0 border-[#c3c6cc] pl-[5px]">
                  <legend className="px-[6px] pt-[2px] leading-[14px] text-black">图形显示</legend>
                  <div className="mt-[31px] overflow-hidden bg-black">
                    <StairDrawing />
                  </div>
                </fieldset>
              </div>
            </div>
            <RebarGrid />
          </div>
        </div>
      </div>
    </main>
  );
}

export default function App() {
  return (
    <div className="relative flex h-screen flex-col overflow-hidden bg-white font-['Open_Sans','Noto_Sans_CJK_SC',sans-serif] text-xs leading-4">
      <Header />
      <div className="flex min-h-0 flex-1">
        <NavStrip />
        <div className="flex w-[289px] shrink-0 flex-col">
          <ComponentPanel />
          <PropertyPanel />
        </div>
        <div className="flex w-[2px] shrink-0 items-center">
          <div className="mt-[86px] h-[100px] w-full bg-[#5a6068]" />
        </div>
        <TableInputWindow />
      </div>
      <svg width="336" height="514" viewBox="0 0 336 514" fill="none" className="pointer-events-none absolute top-[206px] left-[700px]" aria-hidden="true">
        <ellipse cx="167.500" cy="257" rx="163" ry="252.500" stroke="#fb3a3a" strokeWidth="7" />
      </svg>
    </div>
  );
}
